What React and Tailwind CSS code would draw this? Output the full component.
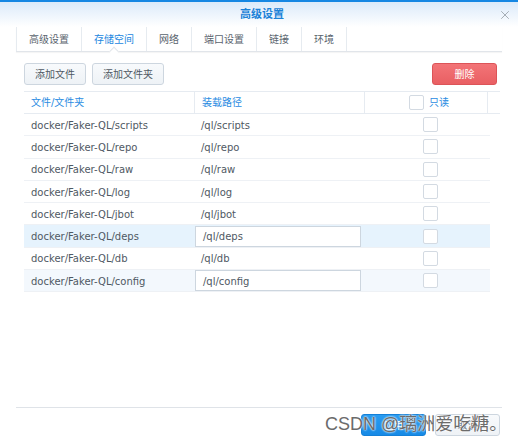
import React from 'react'
import { X } from 'lucide-react'

const tabs = ['高级设置', '存储空间', '网络', '端口设置', '链接', '环境']

const rows = [
  { src: 'docker/Faker-QL/scripts', dst: '/ql/scripts' },
  { src: 'docker/Faker-QL/repo', dst: '/ql/repo' },
  { src: 'docker/Faker-QL/raw', dst: '/ql/raw' },
  { src: 'docker/Faker-QL/log', dst: '/ql/log' },
  { src: 'docker/Faker-QL/jbot', dst: '/ql/jbot' },
  { src: 'docker/Faker-QL/deps', dst: '/ql/deps', edit: true, bg: 'bg-[#e6f3fd]' },
  { src: 'docker/Faker-QL/db', dst: '/ql/db' },
  { src: 'docker/Faker-QL/config', dst: '/ql/config', edit: true, bg: 'bg-[#f3f8fd]' },
]

const Box = () => (
  <span className="block h-[15px] w-[15px] rounded-[2px] border border-[#d3dae2] bg-white" />
)

export default function App() {
  return (
    <div className="relative h-[439px] w-[518px] overflow-hidden bg-white font-['DejaVu_Sans','Noto_Sans_CJK_SC',sans-serif] text-[10px] text-[#4f5963]">
      {/* title bar */}
      <div className="h-[2px] bg-[#1687e3]" />
      <div className="relative flex h-[25px] items-center justify-center bg-gradient-to-b from-[#dbeafa] to-white">
        <span className="ml-[6px] mt-[1px] text-[11px] font-bold text-[#1b82d8]">高级设置</span>
        <X className="absolute right-[6px] top-[6px] h-[14px] w-[14px] text-[#9aa3ab]" strokeWidth={1.5} />
      </div>

      {/* tabs */}
      <div className="relative mx-[16px] flex h-[25px] border-b border-[#e1e5ea] shadow-[0_1px_1px_rgba(0,0,0,0.04)]">
        {tabs.map((t, i) => (
          <div
            key={t}
            className={`relative flex items-center border-r border-[#e6ebf0] px-[12px] ${i === 0 ? 'border-l' : ''} ${i === 1 ? 'text-[#1b87e0]' : 'text-[#5a646e]'}`}
          >
            {t}
            {i === 1 && (
              <span className="absolute -bottom-[4px] left-1/2 h-[7px] w-[7px] -translate-x-1/2 rotate-45 border-l border-t border-[#e1e5ea] bg-white" />
            )}
          </div>
        ))}
      </div>

      {/* toolbar */}
      <div className="mx-[24px] mt-[11px] flex items-center gap-[6px]">
        <button className="h-[22px] w-[62px] rounded-[3px] border border-[#cdd6df] bg-gradient-to-b from-[#f8fafc] to-[#eef2f6] text-[#4f5963]">添加文件</button>
        <button className="h-[22px] w-[72px] rounded-[3px] border border-[#cdd6df] bg-gradient-to-b from-[#f8fafc] to-[#eef2f6] text-[#4f5963]">添加文件夹</button>
        <button className="ml-auto mr-[-3px] h-[22px] w-[65px] rounded-[3px] border border-[#dc5458] bg-gradient-to-b from-[#f37477] to-[#e95f63] text-white">删除</button>
      </div>

      {/* table */}
      <div className="ml-[24px] mt-[6px] w-[476px]">
        <div className="grid h-[23px] grid-cols-[170px_170px_123px_13px] border-y border-[#e6ebf1] text-[#2a8ce2]">
          <div className="flex items-center pl-[7px]">文件/文件夹</div>
          <div className="flex items-center border-l border-[#e6ebf1] pl-[7px]">装载路径</div>
          <div className="flex items-center justify-center gap-[5px] border-l border-[#e6ebf1] pl-[6px]">
            <Box />
            <span>只读</span>
          </div>
          <div className="border-l border-[#e6ebf1]" />
        </div>
        <div className="w-[466px]">
          {rows.map((r) => (
            <div
              key={r.src}
              className={`grid h-[22.3px] grid-cols-[170px_170px_126px] items-center border-b border-[#eef1f5] ${r.bg || ''}`}
            >
              <div className="pl-[7px] pt-px">{r.src}</div>
              <div className="pr-[3px]">
                {r.edit ? (
                  <div className="ml-px flex h-[21px] w-[166px] items-center border border-[#cdd6df] bg-white pl-[7px] pt-px">{r.dst}</div>
                ) : (
                  <div className="pl-[7px] pt-px">{r.dst}</div>
                )}
              </div>
              <div className="flex justify-center pl-[6px]">
                <Box />
              </div>
            </div>
          ))}
        </div>
      </div>

      {/* footer */}
      <div className="absolute bottom-0 left-0 right-0">
        <div className="mx-[16px] border-t border-[#dfe3e8]" />
        <div className="flex justify-end gap-[9px] px-[18px] pb-[3px] pt-[6px]">
          <button className="h-[22px] w-[65px] rounded-[3px] border border-[#1480d8] bg-gradient-to-b from-[#2a9cf0] to-[#168ae6] text-white">应用</button>
          <button className="h-[22px] w-[65px] rounded-[3px] border border-[#cdd6df] bg-gradient-to-b from-[#f8fafc] to-[#eef2f6] text-[#4f5963]">取消</button>
        </div>
      </div>

      {/* watermark */}
      <div className="pointer-events-none absolute left-[325px] top-[411px] font-['Liberation_Sans','Noto_Sans_CJK_SC',sans-serif] text-[18px] text-[#6b6b6b] [text-shadow:0_0_2px_#fff,0_0_2px_#fff]">
        CSDN @璃洲爱吃糖。
      </div>
    </div>
  )
}
